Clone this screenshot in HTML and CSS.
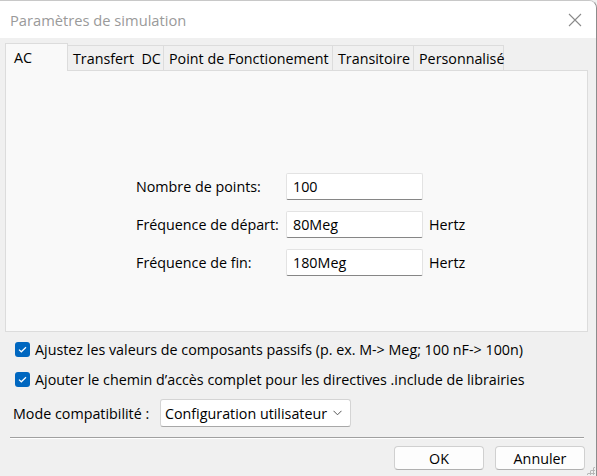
FILE: index.html
```html
<!DOCTYPE html>
<html lang="fr">
<head>
<meta charset="utf-8">
<title>Paramètres de simulation</title>
<link rel="stylesheet" href="styles.css">
</head>
<body>
<div class="window">
  <div class="titlebar">
    <span class="title">Paramètres de simulation</span>
    <svg class="close" width="14" height="14" viewBox="0 0 14 14"><path d="M1 1L13 13M13 1L1 13" stroke="#8a8a8a" stroke-width="1.1" fill="none"/></svg>
  </div>
  <div class="tabs">
    <div class="tab active">AC</div>
    <div class="tab t-dc">Transfert&nbsp; DC</div>
    <div class="tab t-op">Point de Fonctionement</div>
    <div class="tab t-tr">Transitoire</div>
    <div class="tab t-pe">Personnalisé</div>
  </div>
  <div class="panel">
    <div class="form">
      <label class="lbl">Nombre de points:</label>
      <div class="input">100</div>
      <span class="unit"></span>
      <label class="lbl">Fréquence de départ:</label>
      <div class="input">80Meg</div>
      <span class="unit">Hertz</span>
      <label class="lbl">Fréquence de fin:</label>
      <div class="input">180Meg</div>
      <span class="unit">Hertz</span>
    </div>
  </div>
  <div class="options">
    <div class="check-row"><span class="cb"><svg width="15" height="15" viewBox="0 0 15 15"><path d="M4 7.6L6.3 9.8L11 5.2" stroke="#fff" stroke-width="1.2" fill="none"/></svg></span><span>Ajustez les valeurs de composants passifs (p. ex. M-&gt; Meg; 100 nF-&gt; 100n)</span></div>
    <div class="check-row"><span class="cb"><svg width="15" height="15" viewBox="0 0 15 15"><path d="M4 7.6L6.3 9.8L11 5.2" stroke="#fff" stroke-width="1.2" fill="none"/></svg></span><span>Ajouter le chemin d’accès complet pour les directives .include de librairies</span></div>
    <div class="mode-row">
      <span class="mode-lbl">Mode compatibilité :</span>
      <div class="select"><span>Configuration utilisateur</span><svg width="9" height="6" viewBox="0 0 9 6"><path d="M0.5 0.8L4.5 4.8L8.5 0.8" stroke="#555" stroke-width="1" fill="none"/></svg></div>
    </div>
  </div>
  <div class="sep"></div>
  <div class="buttons">
    <div class="btn">OK</div>
    <div class="btn">Annuler</div>
  </div>
  <div class="grip"></div>
</div>
</body>
</html>
```

FILE: styles.css
```css
html, body {
  margin: 0;
  padding: 0;
  background: #f0f0f0;
}
body {
  font-family: "Open Sans", "Noto Sans", sans-serif;
  font-size: 14.3px;
  color: #000;
}
.window {
  position: relative;
  width: 597px;
  height: 476px;
  box-sizing: border-box;
  background: #f0f0f0;
  border-top: 1px solid #c8c8c8;
  border-right: 1px solid #8c8c8c;
  border-top-right-radius: 8px;
  border-bottom-left-radius: 8px;
  overflow: hidden;
  display: flex;
  flex-direction: column;
}
.titlebar {
  height: 37px;
  background: #fff;
  display: flex;
  align-items: center;
  justify-content: space-between;
  padding: 0 14px 0 10px;
  flex-shrink: 0;
}
.title {
  color: #9a9a9a;
  font-size: 14.7px;
}
.close { display: block; }
.tabs {
  display: flex;
  align-items: flex-end;
  height: 27px;
  margin-top: 5px;
  padding-left: 5px;
  position: relative;
  z-index: 1;
}
.tab {
  height: 25px;
  box-sizing: border-box;
  border: 1px solid #dcdcdc;
  border-bottom: none;
  border-left: none;
  background: #f0f0f0;
  display: flex;
  align-items: center;
  padding-left: 5px;
  white-space: nowrap;
}
.tab.active {
  height: 28px;
  margin-bottom: -1px;
  width: 63px;
  border-left: 1px solid #dcdcdc;
  background: #f9f9f9;
  padding-left: 8px;
}
.t-dc { width: 96px; }
.t-op { width: 169px; }
.t-tr { width: 81px; }
.t-pe { width: 90px; }
.panel {
  margin: 0 8px 0 5px;
  height: 262px;
  box-sizing: border-box;
  background: #f9f9f9;
  border: 1px solid #dcdcdc;
  padding: 102px 0 0 130px;
  flex-shrink: 0;
}
.form {
  display: grid;
  grid-template-columns: 150px 137px auto;
  grid-auto-rows: 27px;
  row-gap: 11px;
  align-items: center;
}
.input {
  height: 27px;
  box-sizing: border-box;
  background: #fff;
  border: 1px solid #e3e3e3;
  border-bottom: 1px solid #868686;
  border-radius: 2px;
  padding-left: 6px;
  display: flex;
  align-items: center;
}
.unit { padding-left: 6px; }
.options {
  padding: 2px 0 0 15px;
  flex-shrink: 0;
}
.check-row {
  height: 30px;
  display: flex;
  align-items: center;
  gap: 5px;
}
.cb {
  width: 15px;
  height: 15px;
  border-radius: 3px;
  background: #0067c0;
  display: block;
}
.cb svg { display: block; }
.mode-row {
  margin-top: 5px;
  margin-left: -2px;
  height: 28px;
  display: flex;
  align-items: center;
}
.mode-lbl { width: 147px; }
.select {
  width: 191px;
  height: 28px;
  box-sizing: border-box;
  background: #fff;
  border: 1px solid #d4d4d4;
  border-bottom-color: #a8a8a8;
  border-radius: 3px;
  display: flex;
  align-items: center;
  justify-content: space-between;
  padding: 0 8px 0 4px;
}
.select svg { display: block; }
.sep {
  margin: 10px 12px 0 10px;
  height: 1px;
  background: #a0a0a0;
  border-bottom: 1px solid #fff;
  flex-shrink: 0;
}
.buttons {
  display: flex;
  justify-content: flex-end;
  gap: 11px;
  padding: 7px 11px 0 0;
}
.btn {
  width: 90px;
  height: 24px;
  box-sizing: border-box;
  background: #fdfdfd;
  border: 1px solid #d0d0d0;
  border-bottom-color: #b0b0b0;
  border-radius: 4px;
  display: flex;
  align-items: center;
  justify-content: center;
}
.grip {
  position: absolute;
  right: 1px;
  bottom: 1px;
  width: 9px;
  height: 9px;
  background-image: radial-gradient(circle, #b8b8b8 1px, transparent 1.2px);
  background-size: 3px 3px;
  clip-path: polygon(100% 0, 100% 100%, 0 100%);
}
```
